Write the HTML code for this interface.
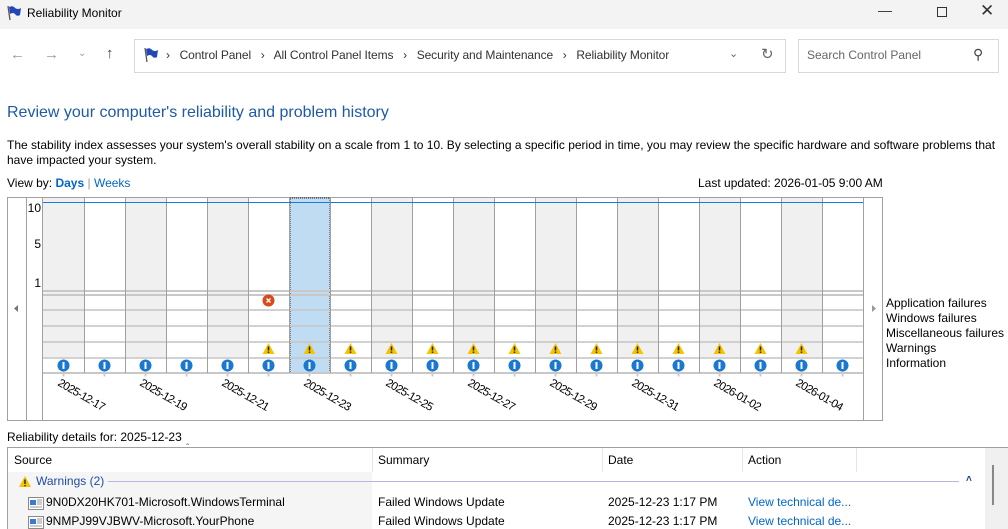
<!DOCTYPE html>
<html><head><meta charset="utf-8"><style>
*{margin:0;padding:0;box-sizing:border-box}
body{width:1008px;height:529px;overflow:hidden;background:#fff;font-family:"Segoe UI","Liberation Sans",sans-serif;font-size:12px;color:#000;position:relative}
.a{position:absolute;white-space:nowrap}
.blue{color:#0066cc}
</style></head><body>
<div class="a" style="left:0;top:0;width:1008px;height:29px;background:#f3f3f3"></div>
<svg class="a" style="left:6;top:5px;left:6px" width="16" height="16" viewBox="0 0 16 16"><path d="M2 1 L4 15" stroke="#555" stroke-width="1.3"/><path d="M3 2 Q7 0 9 3 Q12 5 15 3 L14 10 Q11 12 9 9 Q7 7 4 9 Z" fill="#2447b8"/></svg>
<div class="a" style="left:27px;top:6px;font-size:12px">Reliability Monitor</div>
<div class="a" style="left:878px;top:2px;font-size:14px;color:#333">&#8212;</div>
<div class="a" style="left:937px;top:7px;width:10px;height:10px;border:1px solid #333"></div>
<div class="a" style="left:980px;top:1px;font-size:17px;color:#333">&#10005;</div>
<!-- nav -->
<div class="a" style="left:10px;top:46px;font-size:15px;color:#9a9a9a">&#8592;</div>
<div class="a" style="left:44px;top:46px;font-size:15px;color:#9a9a9a">&#8594;</div>
<div class="a" style="left:78px;top:48px;font-size:10px;color:#9a9a9a">&#8964;</div>
<div class="a" style="left:106px;top:45px;font-size:15px;color:#444">&#8593;</div>
<div class="a" style="left:134px;top:39px;width:652px;height:34px;border:1px solid #d9d9d9"></div>
<svg class="a" style="left:143px;top:47px" width="16" height="16" viewBox="0 0 16 16"><path d="M2 1 L4 15" stroke="#555" stroke-width="1.3"/><path d="M3 2 Q7 0 9 3 Q12 5 15 3 L14 10 Q11 12 9 9 Q7 7 4 9 Z" fill="#2447b8"/></svg>
<div class="a" style="left:166px;top:48px;font-size:12px;color:#333;letter-spacing:-0.1px">›&nbsp;&nbsp; Control Panel &nbsp;&nbsp;›&nbsp;&nbsp; All Control Panel Items &nbsp;&nbsp;›&nbsp;&nbsp; Security and Maintenance &nbsp;&nbsp;›&nbsp;&nbsp; Reliability Monitor</div>
<div class="a" style="left:729px;top:47px;font-size:11px;color:#666">&#8964;</div>
<div class="a" style="left:761px;top:45px;font-size:15px;color:#666">&#8635;</div>
<div class="a" style="left:798px;top:39px;width:201px;height:34px;border:1px solid #d9d9d9"></div>
<div class="a" style="left:807px;top:48px;color:#666">Search Control Panel</div>
<div class="a" style="left:973px;top:46px;font-size:14px;color:#444">&#9906;</div>
<!-- heading -->
<div class="a" style="left:7px;top:104px;font-size:16px;color:#1e5aa8">Review your computer's reliability and problem history</div>
<div class="a" style="left:7px;top:138px;line-height:15px;width:990px;white-space:normal">The stability index assesses your system's overall stability on a scale from 1 to 10. By selecting a specific period in time, you may review the specific hardware and software problems that have impacted your system.</div>
<div class="a" style="left:7px;top:176px">View by: <b class="blue" style="font-weight:bold;color:#0066cc">Days</b> <span style="color:#999">|</span> <span class="blue">Weeks</span></div>
<div class="a" style="left:698px;top:176px">Last updated: 2026-01-05 9:00 AM</div>
<!-- chart -->
<svg class="a" style="left:0;top:0" width="1008" height="425">
<defs>
<g id="inf"><line x1="0" y1="6" x2="0" y2="11" stroke="#ccc" stroke-width="2"/><circle r="6" fill="#1a78d0"/><rect x="-1" y="-3.5" width="2" height="7" fill="#fff"/></g>
<g id="wrn"><path d="M0 -6 L6 5 L-6 5 Z" fill="#f5c400"/><rect x="-0.8" y="-2.5" width="1.6" height="4" fill="#222"/><rect x="-0.8" y="2.5" width="1.6" height="1.4" fill="#222"/></g>
</defs>
<rect x="7.5" y="197.5" width="875" height="223" fill="#fff" stroke="#a0a0a0"/>
<line x1="26.5" y1="198" x2="26.5" y2="421" stroke="#a0a0a0"/>
<line x1="42.5" y1="198" x2="42.5" y2="421" stroke="#a0a0a0"/>
<line x1="863.5" y1="198" x2="863.5" y2="421" stroke="#a0a0a0"/>
<g fill="#f0f0f0">
<rect x="43" y="198" width="41" height="159"/><rect x="125" y="198" width="41" height="159"/><rect x="207" y="198" width="41" height="159"/><rect x="371" y="198" width="41" height="159"/><rect x="453" y="198" width="41" height="159"/><rect x="535" y="198" width="41" height="159"/><rect x="617" y="198" width="41" height="159"/><rect x="699" y="198" width="41" height="159"/><rect x="781" y="198" width="41" height="159"/>
</g>
<rect x="290" y="198" width="40" height="175" fill="#c0dcf3" stroke="#222" stroke-dasharray="1,1"/>
<g stroke="#c8c8c8" stroke-width="2">
<line x1="43" y1="291" x2="863" y2="291"/><line x1="43" y1="295" x2="863" y2="295"/><line x1="43" y1="373" x2="863" y2="373"/>
</g>
<g stroke="#c4c4c4" stroke-width="1.5">
<line x1="43" y1="310" x2="863" y2="310"/><line x1="43" y1="326" x2="863" y2="326"/><line x1="43" y1="342" x2="863" y2="342"/><line x1="43" y1="358" x2="863" y2="358"/>
</g>
<g stroke="#a0a0a0">
<line x1="84.5" y1="198" x2="84.5" y2="373"/><line x1="125.5" y1="198" x2="125.5" y2="373"/><line x1="166.5" y1="198" x2="166.5" y2="373"/><line x1="207.5" y1="198" x2="207.5" y2="373"/><line x1="248.5" y1="198" x2="248.5" y2="373"/><line x1="289.5" y1="198" x2="289.5" y2="373"/><line x1="330.5" y1="198" x2="330.5" y2="373"/><line x1="371.5" y1="198" x2="371.5" y2="373"/><line x1="412.5" y1="198" x2="412.5" y2="373"/><line x1="453.5" y1="198" x2="453.5" y2="373"/><line x1="494.5" y1="198" x2="494.5" y2="373"/><line x1="535.5" y1="198" x2="535.5" y2="373"/><line x1="576.5" y1="198" x2="576.5" y2="373"/><line x1="617.5" y1="198" x2="617.5" y2="373"/><line x1="658.5" y1="198" x2="658.5" y2="373"/><line x1="699.5" y1="198" x2="699.5" y2="373"/><line x1="740.5" y1="198" x2="740.5" y2="373"/><line x1="781.5" y1="198" x2="781.5" y2="373"/><line x1="822.5" y1="198" x2="822.5" y2="373"/>
</g>
<line x1="43" y1="202.5" x2="863" y2="202.5" stroke="#1a7ad8"/>
<g font-family="Liberation Sans, sans-serif" font-size="12" text-anchor="end" fill="#000">
<text x="41" y="212">10</text><text x="41" y="248">5</text><text x="41" y="287">1</text>
</g>
<path d="M18 305 L14 308.5 L18 312 Z" fill="#777"/>
<path d="M872 305 L876 308.5 L872 312 Z" fill="#999"/>
<circle cx="268.5" cy="300.5" r="6" fill="#d84a1e"/><path d="M266.5 298.5 L270.5 302.5 M270.5 298.5 L266.5 302.5" stroke="#fff" stroke-width="1.3"/>
<use href="#wrn" x="268.5" y="349"/><use href="#wrn" x="309.5" y="349"/><use href="#wrn" x="350.5" y="349"/><use href="#wrn" x="391.5" y="349"/><use href="#wrn" x="432.5" y="349"/><use href="#wrn" x="473.5" y="349"/><use href="#wrn" x="514.5" y="349"/><use href="#wrn" x="555.5" y="349"/><use href="#wrn" x="596.5" y="349"/><use href="#wrn" x="637.5" y="349"/><use href="#wrn" x="678.5" y="349"/><use href="#wrn" x="719.5" y="349"/><use href="#wrn" x="760.5" y="349"/><use href="#wrn" x="801.5" y="349"/>
<use href="#inf" x="63.5" y="365.5"/><use href="#inf" x="104.5" y="365.5"/><use href="#inf" x="145.5" y="365.5"/><use href="#inf" x="186.5" y="365.5"/><use href="#inf" x="227.5" y="365.5"/><use href="#inf" x="268.5" y="365.5"/><use href="#inf" x="309.5" y="365.5"/><use href="#inf" x="350.5" y="365.5"/><use href="#inf" x="391.5" y="365.5"/><use href="#inf" x="432.5" y="365.5"/><use href="#inf" x="473.5" y="365.5"/><use href="#inf" x="514.5" y="365.5"/><use href="#inf" x="555.5" y="365.5"/><use href="#inf" x="596.5" y="365.5"/><use href="#inf" x="637.5" y="365.5"/><use href="#inf" x="678.5" y="365.5"/><use href="#inf" x="719.5" y="365.5"/><use href="#inf" x="760.5" y="365.5"/><use href="#inf" x="801.5" y="365.5"/><use href="#inf" x="842.5" y="365.5"/>
<g font-family="Liberation Sans, sans-serif" font-size="11.5" fill="#000" letter-spacing="-0.7">
<text transform="translate(57,385) rotate(30)">2025-12-17</text>
<text transform="translate(139,385) rotate(30)">2025-12-19</text>
<text transform="translate(221,385) rotate(30)">2025-12-21</text>
<text transform="translate(303,385) rotate(30)">2025-12-23</text>
<text transform="translate(385,385) rotate(30)">2025-12-25</text>
<text transform="translate(467,385) rotate(30)">2025-12-27</text>
<text transform="translate(549,385) rotate(30)">2025-12-29</text>
<text transform="translate(631,385) rotate(30)">2025-12-31</text>
<text transform="translate(713,385) rotate(30)">2026-01-02</text>
<text transform="translate(795,385) rotate(30)">2026-01-04</text>
</g>
</svg>
<div class="a" style="left:886px;top:296px;line-height:15px">Application failures<br>Windows failures<br>Miscellaneous failures<br>Warnings<br>Information</div>
<!-- details -->
<div class="a" style="left:7px;top:430px">Reliability details for: 2025-12-23</div>
<div class="a" style="left:7px;top:447px;width:1001px;height:82px;border:1px solid #a0a0a0;border-right:none;border-bottom:none"></div>
<div class="a" style="left:8px;top:448px;width:364px;height:81px;background:#f5f5f5"></div>
<div class="a" style="left:8px;top:448px;width:977px;height:24px;background:#fff"></div>
<div class="a" style="left:372px;top:448px;width:1px;height:24px;background:#e5e5e5"></div>
<div class="a" style="left:602px;top:448px;width:1px;height:24px;background:#e5e5e5"></div>
<div class="a" style="left:742px;top:448px;width:1px;height:24px;background:#e5e5e5"></div>
<div class="a" style="left:856px;top:448px;width:1px;height:24px;background:#e5e5e5"></div>
<div class="a" style="left:186px;top:443px;font-size:10px;color:#666">&#710;</div>
<div class="a" style="left:14px;top:453px">Source</div>
<div class="a" style="left:378px;top:453px">Summary</div>
<div class="a" style="left:608px;top:453px">Date</div>
<div class="a" style="left:748px;top:453px">Action</div>
<div class="a" style="left:985px;top:448px;width:23px;height:81px;background:#f0f0f0"></div>
<div class="a" style="left:992px;top:465px;width:2px;height:40px;background:#888"></div>
<svg class="a" style="left:18px;top:475px" width="14" height="13"><path d="M7 1 L13 12 L1 12 Z" fill="#f5c400"/><rect x="6.3" y="4.5" width="1.4" height="4.5" fill="#222"/><rect x="6.3" y="10" width="1.4" height="1.3" fill="#222"/></svg>
<div class="a" style="left:36px;top:474px;color:#1e4ba8">Warnings (2)</div>
<div class="a" style="left:108px;top:481px;width:851px;height:1px;background:#b4b8dc"></div>
<div class="a" style="left:966px;top:474px;font-size:10px;color:#1e3c96;font-weight:bold">&#708;</div>
<svg class="a" style="left:28px;top:497px" width="16" height="13"><rect x="0.5" y="0.5" width="15" height="12" fill="#fff" stroke="#8a8a8a"/><rect x="2" y="3" width="6" height="5" fill="#3a7ad0"/><path d="M9 3h5M9 5h5M9 7h5M2 10h12" stroke="#999"/></svg>
<div class="a" style="left:46px;top:495px">9N0DX20HK701-Microsoft.WindowsTerminal</div>
<svg class="a" style="left:28px;top:516px" width="16" height="13"><rect x="0.5" y="0.5" width="15" height="12" fill="#fff" stroke="#8a8a8a"/><rect x="2" y="3" width="6" height="5" fill="#3a7ad0"/><path d="M9 3h5M9 5h5M9 7h5M2 10h12" stroke="#999"/></svg>
<div class="a" style="left:46px;top:514px">9NMPJ99VJBWV-Microsoft.YourPhone</div>
<div class="a" style="left:378px;top:495px">Failed Windows Update</div>
<div class="a" style="left:378px;top:514px">Failed Windows Update</div>
<div class="a" style="left:608px;top:495px">2025-12-23 1:17 PM</div>
<div class="a" style="left:608px;top:514px">2025-12-23 1:17 PM</div>
<div class="a blue" style="left:748px;top:495px">View technical de...</div>
<div class="a blue" style="left:748px;top:514px">View technical de...</div>
</body></html>
